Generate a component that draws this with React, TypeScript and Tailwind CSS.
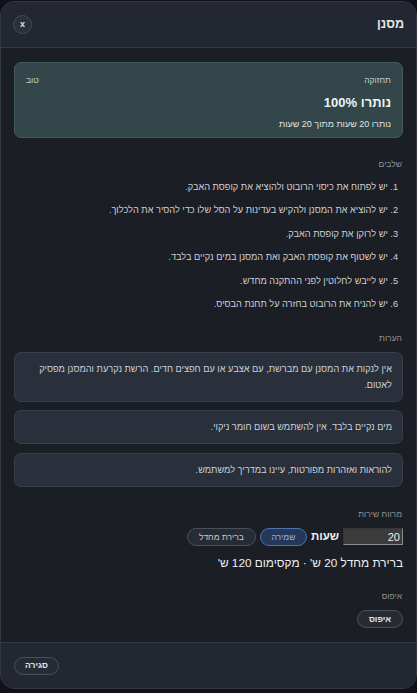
import React from "react";

const steps = [
  "1. יש לפתוח את כיסוי הרובוט ולהוציא את קופסת האבק.",
  "2. יש להוציא את המסנן ולהקיש בעדינות על הסל שלו כדי להסיר את הלכלוך.",
  "3. יש לרוקן את קופסת האבק.",
  "4. יש לשטוף את קופסת האבק ואת המסנן במים נקיים בלבד.",
  "5. יש לייבש לחלוטין לפני ההתקנה מחדש.",
  "6. יש להניח את הרובוט בחזרה על תחנת הבסיס.",
];

const notes = [
  "אין לנקות את המסנן עם מברשת, עם אצבע או עם חפצים חדים. הרשת נקרעת והמסנן מפסיק לאטום.",
  "מים נקיים בלבד. אין להשתמש בשום חומר ניקוי.",
  "להוראות ואזהרות מפורטות, עיינו במדריך למשתמש.",
];

export default function App() {
  return (
    <div
      className="w-[417px] h-[693px] bg-[#0f1116] overflow-hidden"
      style={{ fontFamily: '"Liberation Sans", Arial, sans-serif' }}
    >
      <div
        dir="rtl"
        className="mt-px h-[688px] flex flex-col rounded-[14px] border border-[#333843] bg-[#1b1e25] overflow-hidden"
      >
        {/* Header */}
        <div className="h-[46px] shrink-0 flex items-center justify-between px-[12px] bg-[#222731] border-b border-[#353a45]">
          <div className="text-[12.5px] font-bold text-[#e6e8ec]">מסנן</div>
          <button className="w-[19px] h-[19px] rounded-full bg-[#2a2f39] border border-[#454b57] flex items-center justify-center text-[9px] font-bold text-[#dfe2e6] leading-none">
            x
          </button>
        </div>

        {/* Body */}
        <div className="flex-1 flex flex-col px-[13px] pt-[14px]">
          <div className="h-[76px] rounded-[7px] bg-[#33474a] border border-[#475b5e] px-[11px] pt-[10px] flex flex-col">
            <div className="flex justify-between text-[8.5px] leading-[14px] text-[#c3cdcd]">
              <span>תחזוקה</span>
              <span>טוב</span>
            </div>
            <div className="mt-[6px] text-[13px] font-bold leading-[20px] text-[#f1f3f4]">נותרו 100%</div>
            <div className="mt-[4px] text-[9px] leading-[14px] text-[#dfe4e4]">נותרו 20 שעות מתוך 20 שעות</div>
          </div>

          <div className="mt-[19px] pr-px text-[8.5px] leading-[14px] text-[#8d939c]">שלבים</div>
          <ol className="mt-[8px] pr-[5px] flex flex-col gap-[7.4px]">
            {steps.map((s) => (
              <li key={s} className="text-[9.2px] leading-[16px] text-[#cdd0d5]">
                {s}
              </li>
            ))}
          </ol>

          <div className="mt-[19px] pr-px text-[8.5px] leading-[14px] text-[#8d939c]">הערות</div>
          <div className="mt-[7px] flex flex-col gap-[8.5px]">
            {notes.map((n) => (
              <div
                key={n}
                className="rounded-[7px] bg-[#29303b] border border-[#383f4b] px-[10px] py-[8px] text-[9.2px] leading-[16px] text-[#ccd0d6]"
              >
                {n}
              </div>
            ))}
          </div>

          <div className="mt-[20px] pr-px text-[8.5px] leading-[14px] text-[#8d939c]">מרווח שירות</div>
          <div className="mt-[7px] flex items-center gap-[4px]">
            <input
              defaultValue="20"
              className="w-[60px] h-[17px] bg-[#3b3b3b] border border-[#8a8a8a] px-[2px] text-[11px] text-[#f0f0f0] text-right outline-none"
              style={{ borderStyle: "inset" }}
            />
            <span className="text-[11.5px] font-bold leading-[17px] text-[#eef0f2]">שעות</span>
            <button className="h-[18px] w-[47px] rounded-full bg-[#25385a] border border-[#4b73ad] text-[8.5px] text-[#8eb6ef] leading-none">
              שמירה
            </button>
            <button className="h-[18px] w-[69px] rounded-full bg-[#262b34] border border-[#4a505a] text-[8.5px] text-[#c8ccd2] leading-none">
              ברירת מחדל
            </button>
          </div>
          <div className="mt-[8px] text-[11.8px] leading-[18px] text-[#eef0f2]">ברירת מחדל 20 ש' · מקסימום 120 ש'</div>

          <div className="mt-[17px] pr-px text-[8.5px] leading-[14px] text-[#8d939c]">איפוס</div>
          <div className="mt-[7px] flex">
            <button className="h-[18px] w-[46px] rounded-full bg-[#262b34] border border-[#4a505a] text-[8.5px] font-bold text-[#e4e6ea] leading-none">
              איפוס
            </button>
          </div>
        </div>

        {/* Footer */}
        <div className="h-[46px] shrink-0 flex items-center justify-end px-[13px] bg-[#222731] border-t border-[#353a45]">
          <button className="h-[18px] w-[45px] rounded-full bg-[#262b34] border border-[#4a505a] text-[8.5px] font-bold text-[#e4e6ea] leading-none">
            סגירה
          </button>
        </div>
      </div>
    </div>
  );
}
